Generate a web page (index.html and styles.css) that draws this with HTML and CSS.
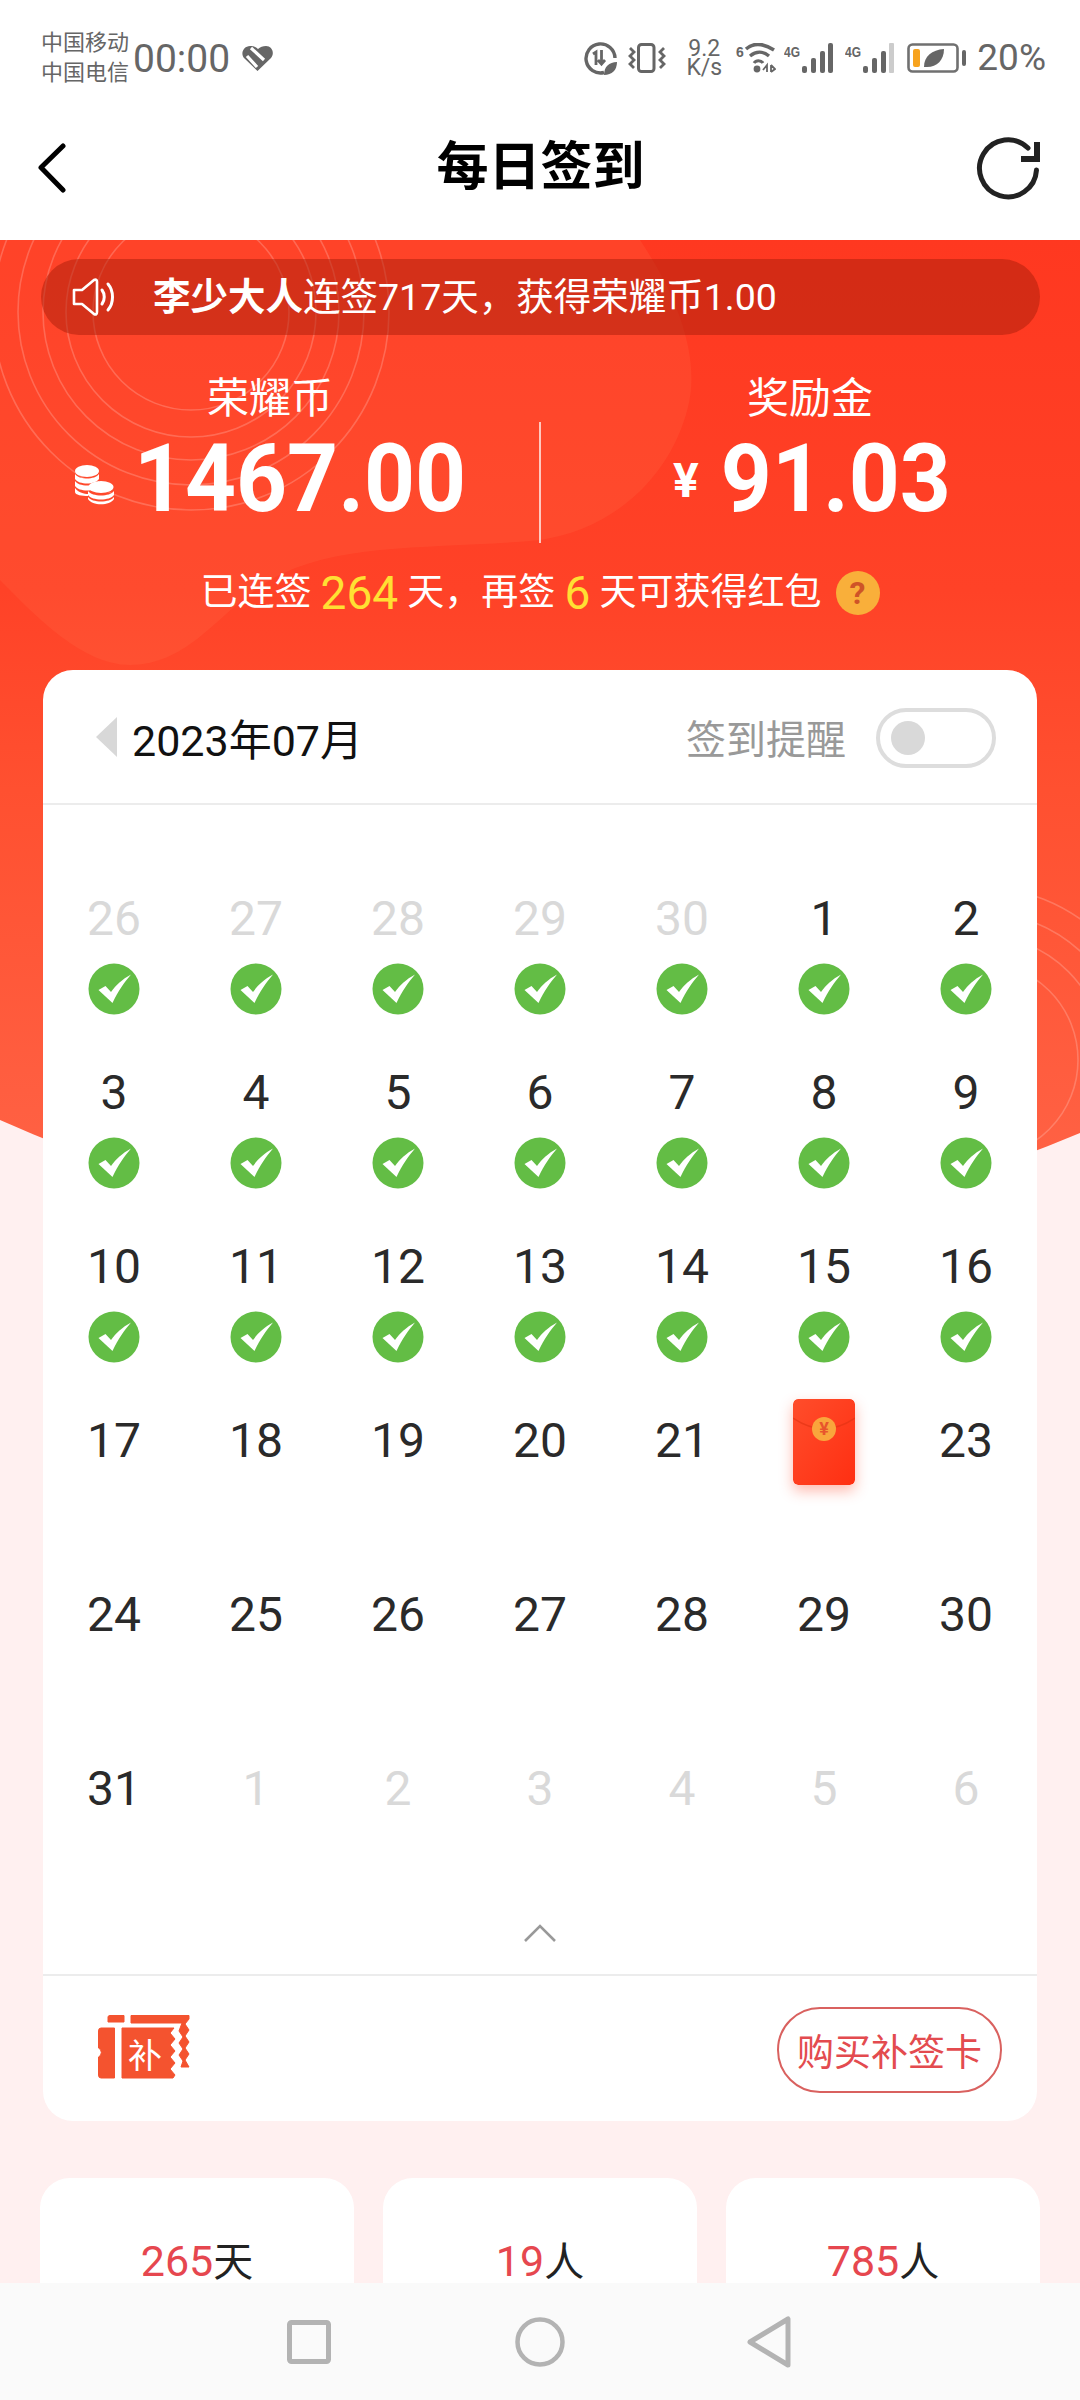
FILE: index.html
```html
<!DOCTYPE html>
<html lang="zh-CN">
<head>
<meta charset="utf-8">
<title>每日签到</title>
<link rel="stylesheet" href="styles.css">
</head>
<body>
<svg class="sprite" xmlns="http://www.w3.org/2000/svg">
  <symbol id="chk" viewBox="0 0 52 52">
    <circle cx="26" cy="26" r="25.5" fill="#63bd45"/>
    <path d="M10.500 27 L17.500 23 L23 29 C28 22 34 16.500 43 11.500 C36 20 30 28 24.500 40 Z" fill="#fff"/>
  </symbol>
</svg>
<div class="app">
  <header class="top">
    <div class="status">
      <div class="carriers"><span>中国移动</span><span>中国电信</span></div>
      <span class="clock">00:00</span>
      <svg class="heart" viewBox="0 0 31 25"><path d="M15.500 25 L2 12 C-2 7 2 0 8 0 C11 0 14 1 16 3 C18 1 21 0 24 0 C30 0 33 7 29 12 Z" fill="#666"/><path d="M9 2 L22 14 M5 10 L15 21" stroke="#fff" stroke-width="3.2" fill="none"/></svg>
      <div class="sys">
        <svg class="i-saver" viewBox="0 0 33 33"><path d="M20 30.500 A14.500 14.500 0 1 1 31 16" fill="none" stroke="#666" stroke-width="3.4"/><path d="M9 12 L12 10 V23 M17.500 8 V22 M14 18 L17.500 22 L21 18" fill="none" stroke="#666" stroke-width="2.8"/><path d="M20 33 C20 25 25 20 33 20 C33 28 28 33 20 33Z" fill="#666"/></svg>
        <svg class="i-vib" viewBox="0 0 38 30"><rect x="10.500" y="1.500" width="15.500" height="27" rx="3" fill="none" stroke="#666" stroke-width="3"/><path d="M2 5 L6 9 L2 13 L6 17 L2 21 L6 25 M36 5 L32 9 L36 13 L32 17 L36 21 L32 25" fill="none" stroke="#666" stroke-width="2.8"/></svg>
        <div class="speed">9.2 K/s</div>
        <svg class="i-wifi" viewBox="0 0 40 30"><text x="0" y="14" class="svg-tiny">6</text><path d="M10 6 C17 0 27 0 38 7" fill="none" stroke="#666" stroke-width="3.6"/><path d="M14 13 C20 8 27 8 33 13" fill="none" stroke="#666" stroke-width="3.4"/><path d="M18 20 C20 17 25 17 27 20" fill="none" stroke="#666" stroke-width="3"/><circle cx="21" cy="26" r="3.4" fill="#666"/><path d="M27 27 L31 22 V29 M35 22 V29 M35 22 L39 26 L35 29" fill="none" stroke="#666" stroke-width="1.8"/></svg>
        <svg class="i-sig" viewBox="0 0 49 30"><text x="0" y="14" class="svg-tiny" textLength="16" lengthAdjust="spacingAndGlyphs">4G</text><rect x="18" y="23" width="5" height="7" rx="2" fill="#666"/><rect x="27" y="15" width="5" height="15" rx="2" fill="#666"/><rect x="36" y="8" width="5" height="22" rx="2" fill="#666"/><rect x="44" y="0" width="5" height="30" rx="2" fill="#666"/></svg>
        <svg class="i-sig i-sig2" viewBox="0 0 49 30"><text x="0" y="14" class="svg-tiny" textLength="16" lengthAdjust="spacingAndGlyphs">4G</text><rect x="18" y="23" width="5" height="7" rx="2" fill="#666"/><rect x="27" y="15" width="5" height="15" rx="2" fill="#666"/><rect x="36" y="8" width="5" height="22" rx="2" fill="#666"/><rect x="44" y="0" width="5" height="30" rx="1" fill="#ccc"/></svg>
        <svg class="i-batt" viewBox="0 0 60 30"><rect x="1.500" y="1.500" width="49" height="27" rx="4" fill="none" stroke="#707070" stroke-width="2.6"/><rect x="6" y="6" width="7" height="18" rx="2" fill="#f7a31e"/><path d="M17 24 C17 13 25 7 37 6 C37 17 30 24 20 24 Z" fill="#666"/><rect x="55" y="7" width="4" height="16" rx="2" fill="#666"/></svg>
        <span class="pct">20%</span>
      </div>
    </div>
    <nav class="bar">
      <svg class="back" viewBox="0 0 30 50"><path d="M26 3 L4 24.500 L26 47" fill="none" stroke="#000" stroke-width="5" stroke-linecap="round" stroke-linejoin="round"/></svg>
      <h1>每日签到</h1>
      <svg class="reload" viewBox="0 0 72 72"><path d="M64.500 38 A28.500 28.500 0 1 1 56 16" fill="none" stroke="#222" stroke-width="5" stroke-linecap="round"/><path d="M65 10 V27 H49" fill="none" stroke="#222" stroke-width="6"/></svg>
    </nav>
  </header>

  <main class="body">
    <svg class="hero-bg" viewBox="0 0 1080 1000" preserveAspectRatio="none">
      <defs>
        <linearGradient id="redg" x1="0" y1="0" x2="0" y2="1"><stop offset="0" stop-color="#ff3820"/><stop offset=".35" stop-color="#ff4227"/><stop offset=".55" stop-color="#ff5030"/><stop offset="1" stop-color="#ff6548"/></linearGradient>
        <clipPath id="shape"><path d="M0 0 H1080 V893 Q540 1120 0 880 Z"/></clipPath>
      </defs>
      <g clip-path="url(#shape)">
        <rect width="1080" height="1000" fill="url(#redg)"/>
        <path d="M0 0 H640 C680 60 700 120 688 167 C670 240 610 290 540 300 C440 310 340 300 270 340 C220 370 190 425 130 425 C80 425 30 370 0 340 Z" fill="#ff8a5a" fill-opacity=".14"/>
        <g fill="none" stroke="#fff" stroke-opacity=".2" stroke-width="1.6">
          <circle cx="191" cy="72" r="98"/><circle cx="191" cy="72" r="125"/><circle cx="191" cy="72" r="148"/><circle cx="191" cy="72" r="173"/><circle cx="191" cy="72" r="198"/>
          <circle cx="980" cy="820" r="98"/><circle cx="980" cy="820" r="125"/><circle cx="980" cy="820" r="148"/><circle cx="980" cy="820" r="173"/>
        </g>
      </g>
    </svg>

    <div class="notice">
      <svg class="speaker" viewBox="0 0 46 38"><path d="M2 12 H10 L22 2 C24 1 25 2 25 4 V34 C25 36 24 37 22 36 L10 26 H2 Z" fill="none" stroke="#fff" stroke-width="2.6" stroke-linejoin="round"/><path d="M30 12 C33 16 33 22 30 26 M36 6 C42 13 42 25 36 32" fill="none" stroke="#fff" stroke-width="3" stroke-linecap="round"/></svg>
      <p><b>李少大人</b>连签717天，获得荣耀币1.00</p>
    </div>

    <section class="wallet">
      <div class="w-col">
        <div class="w-label">荣耀币</div>
        <div class="w-val">
          <svg class="coins" viewBox="0 0 40 40"><g fill="#fff"><ellipse cx="13" cy="6" rx="12" ry="6"/><path d="M1 9 C5 15 21 15 25 9 V14 C21 20 5 20 1 14Z M1 16 C5 22 21 22 25 16 V21 C21 27 5 27 1 21Z M1 23 C5 29 14 29 14 29 V31 C8 31 1 30 1 27Z"/><ellipse cx="27" cy="22" rx="12.500" ry="6"/><path d="M14 26 C18 32 36 32 40 26 V30 C36 36 18 36 14 30Z M14 32 C18 38 36 38 40 32 V34 C36 41 18 41 14 34Z"/></g></svg>
          <span class="big">1467.00</span>
        </div>
      </div>
      <div class="w-rule"></div>
      <div class="w-col">
        <div class="w-label">奖励金</div>
        <div class="w-val w-val-b"><span class="yen">¥</span><span class="big">91.03</span></div>
      </div>
    </section>

    <p class="streak">已连签 <em>264</em> 天，再签 <em>6</em> 天可获得红包<span class="help">?</span></p>

    <section class="card">
      <div class="c-head">
        <span class="prev"></span>
        <span class="month">2023年07月</span>
        <span class="remind">签到提醒</span>
        <span class="toggle"><i></i></span>
      </div>
      <div class="cal">
        <div class="d off"><span>26</span><svg class="chk"><use href="#chk"/></svg></div>
        <div class="d off"><span>27</span><svg class="chk"><use href="#chk"/></svg></div>
        <div class="d off"><span>28</span><svg class="chk"><use href="#chk"/></svg></div>
        <div class="d off"><span>29</span><svg class="chk"><use href="#chk"/></svg></div>
        <div class="d off"><span>30</span><svg class="chk"><use href="#chk"/></svg></div>
        <div class="d"><span>1</span><svg class="chk"><use href="#chk"/></svg></div>
        <div class="d"><span>2</span><svg class="chk"><use href="#chk"/></svg></div>
        <div class="d"><span>3</span><svg class="chk"><use href="#chk"/></svg></div>
        <div class="d"><span>4</span><svg class="chk"><use href="#chk"/></svg></div>
        <div class="d"><span>5</span><svg class="chk"><use href="#chk"/></svg></div>
        <div class="d"><span>6</span><svg class="chk"><use href="#chk"/></svg></div>
        <div class="d"><span>7</span><svg class="chk"><use href="#chk"/></svg></div>
        <div class="d"><span>8</span><svg class="chk"><use href="#chk"/></svg></div>
        <div class="d"><span>9</span><svg class="chk"><use href="#chk"/></svg></div>
        <div class="d"><span>10</span><svg class="chk"><use href="#chk"/></svg></div>
        <div class="d"><span>11</span><svg class="chk"><use href="#chk"/></svg></div>
        <div class="d"><span>12</span><svg class="chk"><use href="#chk"/></svg></div>
        <div class="d"><span>13</span><svg class="chk"><use href="#chk"/></svg></div>
        <div class="d"><span>14</span><svg class="chk"><use href="#chk"/></svg></div>
        <div class="d"><span>15</span><svg class="chk"><use href="#chk"/></svg></div>
        <div class="d"><span>16</span><svg class="chk"><use href="#chk"/></svg></div>
        <div class="d"><span>17</span></div>
        <div class="d"><span>18</span></div>
        <div class="d"><span>19</span></div>
        <div class="d"><span>20</span></div>
        <div class="d"><span>21</span></div>
        <div class="d">
          <svg class="packet" viewBox="0 0 62 86">
            <defs><linearGradient id="pk" x1="0" y1="0" x2="1" y2="1"><stop offset="0" stop-color="#ff4d2b"/><stop offset="1" stop-color="#ff2f12"/></linearGradient></defs>
            <rect width="62" height="86" rx="5" fill="url(#pk)"/>
            <path d="M0 19 Q31 40 62 19" fill="none" stroke="#e03212" stroke-opacity=".6" stroke-width="1.5"/>
            <circle cx="31" cy="30" r="12" fill="#f9a63c"/>
            <text x="31" y="36" text-anchor="middle" class="pk-yen">¥</text>
          </svg>
        </div>
        <div class="d"><span>23</span></div>
        <div class="d"><span>24</span></div>
        <div class="d"><span>25</span></div>
        <div class="d"><span>26</span></div>
        <div class="d"><span>27</span></div>
        <div class="d"><span>28</span></div>
        <div class="d"><span>29</span></div>
        <div class="d"><span>30</span></div>
        <div class="d"><span>31</span></div>
        <div class="d off"><span>1</span></div>
        <div class="d off"><span>2</span></div>
        <div class="d off"><span>3</span></div>
        <div class="d off"><span>4</span></div>
        <div class="d off"><span>5</span></div>
        <div class="d off"><span>6</span></div>
      </div>
      <div class="fold"><svg viewBox="0 0 34 20"><path d="M2 18 L17 3 L32 18" fill="none" stroke="#999" stroke-width="2.6"/></svg></div>
      <div class="c-foot">
        <svg class="ticket" viewBox="0 0 92 64">
          <g fill="#f4532f" stroke="#f4532f" stroke-width="1" stroke-linejoin="round">
            <path d="M10 7 V2 Q10 .5 12 .5 H26 V7 Z"/>
            <path d="M33 .5 H91 V4 L87 9 L91 15 L87 21 L91 27 L87 33 L91 39 L87 45 L91 52 H83 L85 46 L81 40 L85 34 L81 28 L85 22 L81 16 L84 8 H33 Z"/>
            <path d="M3 13 H16.500 V63 H3 Q.5 63 .5 60 V42 A5 5 0 0 0 .5 33 V16 Q.5 13 3 13 Z"/>
            <path d="M24 13 H76 L72 18 L77 24 L72 30 L77 36 L72 42 L77 48 L72 54 L77 60 L75 63 H24 Z"/>
          </g>
          <text x="47" y="53" text-anchor="middle" class="tk-text">补</text>
        </svg>
        <span class="buy">购买补签卡</span>
      </div>
    </section>

    <section class="tallies">
      <div class="tally"><em>265</em>天</div>
      <div class="tally"><em>19</em>人</div>
      <div class="tally"><em>785</em>人</div>
    </section>
  </main>

  <footer class="sysnav">
    <svg class="n-sq" viewBox="0 0 44 44"><rect x="2.500" y="2.500" width="39" height="39" rx="2" fill="none" stroke="#b3b3b3" stroke-width="5"/></svg>
    <svg class="n-ci" viewBox="0 0 50 50"><circle cx="25" cy="25" r="22.500" fill="none" stroke="#b3b3b3" stroke-width="4.500"/></svg>
    <svg class="n-tr" viewBox="0 0 44 52"><path d="M41 3 V49 L3 26 Z" fill="none" stroke="#b3b3b3" stroke-width="5" stroke-linejoin="round"/></svg>
  </footer>
</div>
</body>
</html>
```

FILE: styles.css
```css
* { box-sizing: border-box; }
html, body { margin: 0; padding: 0; }
body { font-family: Roboto, "Noto Sans CJK SC", sans-serif; background: #fff0f0; }
p, h1 { margin: 0; font-weight: 400; }
em { font-style: normal; }
.sprite { display: none; }
.app { position: relative; width: 1080px; height: 2400px; overflow: hidden; background: #fff0f0; }

.top { background: #fff; height: 240px; }
.status { display: flex; align-items: center; height: 96px; padding: 20px 34px 0 41px; color: #666; }
.carriers { display: flex; flex-direction: column; font-size: 22px; line-height: 30px; width: 92px; }
.clock { font-size: 39px; line-height: 44px; padding-top: 2px; }
.heart { width: 31px; height: 25px; margin-left: 12px; }
.sys { display: flex; align-items: center; margin-left: auto; }
.i-saver { width: 33px; height: 33px; }
.i-vib { width: 38px; height: 30px; margin-left: 11px; }
.speed { width: 36px; margin-left: 20px; font-size: 23px; line-height: 19px; text-align: center; }
.i-wifi { width: 40px; height: 30px; margin-left: 14px; }
.svg-tiny { font-family: "Liberation Sans", sans-serif; font-weight: 700; font-size: 14px; fill: #666; }
.i-sig { width: 49px; height: 30px; margin-left: 8px; }
.i-sig2 { margin-left: 12px; }
.i-batt { width: 60px; height: 30px; margin-left: 13px; }
.pct { font-size: 37px; line-height: 44px; margin-left: 10px; }

.bar { display: grid; grid-template-columns: 1fr auto 1fr; align-items: center; height: 144px; padding: 0 36px 0 37px; }
.bar h1 { font-size: 52px; font-weight: 700; color: #000; line-height: 70px; }
.back { width: 30px; height: 50px; }
.reload { width: 72px; height: 72px; justify-self: end; }

.body { position: relative; padding-top: 19px; }
.hero-bg { position: absolute; left: 0; top: 0; width: 1080px; height: 1000px; }

.notice { position: relative; display: flex; align-items: center; height: 76px; margin: 0 40px 0 41px; padding-left: 31px; border-radius: 38px; background: rgba(170, 30, 10, .5); color: #fff; }
.speaker { width: 46px; height: 38px; }
.notice p { margin-left: 35px; font-size: 37.5px; line-height: 50px; }
.notice b { font-weight: 700; }

.wallet { position: relative; display: grid; grid-template-columns: 1fr 1fr; margin-top: 33px; color: #fff; }
.w-col { display: flex; flex-direction: column; align-items: center; }
.w-label { font-size: 42px; line-height: 60px; padding-top: 1px; }
.w-val { display: flex; align-items: center; height: 100px; margin-top: -1px; }
.w-val-b { margin-left: 4px; }
.coins { width: 40px; height: 40px; margin: 14px 20px 0 0; }
.big { font-size: 89px; line-height: 100px; font-weight: 700; padding-top: 2px; transform: scaleY(1.06); }
.yen { font-size: 48px; font-weight: 700; margin: 4px 22px 0 0; }
.w-rule { position: absolute; left: 539px; top: 54px; width: 2px; height: 121px; background: rgba(255, 255, 255, .7); }

.streak { position: relative; display: flex; align-items: center; justify-content: center; height: 60px; margin-top: 34px; padding-top: 2px; color: #fff; font-size: 37px; line-height: 60px; white-space: pre; }
.streak em { color: #ffe033; font-size: 46px; }
.help { display: flex; align-items: center; justify-content: center; width: 44px; height: 44px; margin-left: 14px; border-radius: 50%; background: #f9af3a; color: #cf5427; font-size: 32px; font-weight: 700; }

.card { position: relative; margin: 48px 43px 0; background: #fff; border-radius: 30px; }
.c-head { display: flex; align-items: center; height: 135px; padding: 0 41px 0 53px; border-bottom: 2px solid #ececec; }
.prev { width: 0; height: 0; border-style: solid; border-width: 20px 21px 20px 0; border-color: transparent #d8d8d8 transparent transparent; }
.month { margin-left: 15px; font-size: 43px; color: #111; }
.remind { margin-left: auto; font-size: 40px; color: #999; }
.toggle { display: flex; align-items: center; width: 120px; height: 60px; margin: 2px 0 0 30px; padding-left: 11px; border: 4px solid #ddd; border-radius: 30px; }
.toggle i { width: 34px; height: 34px; border-radius: 50%; background: #d9d9d9; }

.cal { display: grid; grid-template-columns: repeat(7, 142px); grid-auto-rows: 126px; row-gap: 48px; padding-top: 84px; }
.d { display: flex; flex-direction: column; align-items: center; font-size: 48px; line-height: 60px; color: #2a2a2a; }
.d.off { color: #d9d9d9; }
.chk { width: 52px; height: 52px; margin-top: 14px; }
.packet { width: 62px; height: 86px; margin-top: -12px; border-radius: 5px; box-shadow: 0 6px 14px rgba(255, 60, 30, .35); }
.pk-yen { font-family: Roboto, sans-serif; font-weight: 700; font-size: 18px; fill: #e8552c; }

.fold { display: flex; align-items: center; justify-content: center; height: 91px; border-bottom: 2px solid #ececec; }
.fold svg { width: 34px; height: 20px; margin-top: 6px; }
.c-foot { display: flex; align-items: center; justify-content: space-between; height: 145px; padding: 0 35px 0 55px; }
.ticket { width: 92px; height: 64px; margin-top: -4px; }
.tk-text { font-family: "Noto Sans CJK SC", sans-serif; font-size: 34px; fill: #fff; }
.buy { display: flex; align-items: center; justify-content: center; width: 225px; height: 86px; margin-top: 2px; border: 2px solid #d9615f; border-radius: 43px; color: #e34b4f; font-size: 37px; }

.tallies { display: grid; grid-template-columns: repeat(3, 1fr); column-gap: 29px; margin: 57px 40px 0; }
.tally { height: 200px; padding-top: 58px; background: #fff; border-radius: 30px; text-align: center; font-size: 40px; line-height: 50px; color: #222; }
.tally em { color: #e6474f; font-size: 43px; }

.sysnav { position: absolute; left: 0; bottom: 0; display: flex; align-items: center; width: 1080px; height: 117px; padding: 0 0 0 287px; background: #fafafa; }
.n-sq { width: 44px; height: 44px; }
.n-ci { width: 50px; height: 50px; margin-left: 184px; }
.n-tr { width: 44px; height: 52px; margin-left: 182px; }
```
